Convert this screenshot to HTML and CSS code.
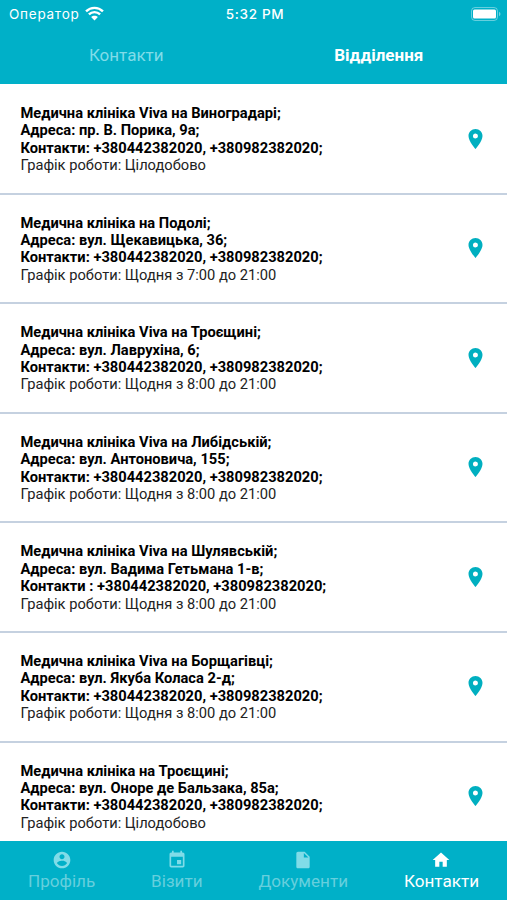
FILE: index.html
```html
<!DOCTYPE html>
<html lang="uk">

<head>
    <meta charset="UTF-8">
    <meta name="viewport" content="width=device-width, initial-scale=1.0">
    <title>Відділення</title>
    <link rel="stylesheet" href="styles.css">
</head>

<body>
    <svg width="0" height="0" class="sprite">
        <symbol id="pin" viewBox="5 2 14 20">
            <path d="M12 2C8.13 2 5 5.13 5 9c0 5.25 7 13 7 13s7-7.75 7-13c0-3.87-3.13-7-7-7zm0 9.5a2.5 2.5 0 1 1 0-5 2.5 2.5 0 0 1 0 5z" />
        </symbol>
    </svg>

    <header class="header">
        <div class="status">
            <div class="operator">
                <span>Оператор</span>
                <svg class="wifi" viewBox="0 0 18 14">
                    <path d="M1 5C5.5 .6 12.500 .6 17 5M3.700 7.900C6.700 5 11.300 5 14.300 7.900" fill="none" stroke="#fff" stroke-width="2.300" />
                    <path d="M9 13.600L5.800 10.400C7.500 8.700 10.500 8.700 12.200 10.400z" fill="#fff" />
                </svg>
            </div>
            <span class="time">5:32 PM</span>
            <div class="power">
                <svg class="battery" viewBox="0 0 30 14">
                    <rect x=".5" y=".5" width="26" height="13" rx="3.500" fill="none" stroke="#fff" stroke-opacity=".4" />
                    <rect x="2" y="2.500" width="23" height="9" rx="1.500" fill="#fff" />
                    <path d="M28 4.800c2 .8 2 3.600 0 4.400z" fill="#fff" fill-opacity=".45" />
                </svg>
            </div>
        </div>
        <div class="tabs">
            <a class="tab">Контакти</a>
            <a class="tab active">Відділення</a>
        </div>
    </header>

    <main class="list">
        <div class="item">
            <div class="info">
                <b>Медична клініка Viva на Виноградарі;</b>
                <b>Адреса: пр. В. Порика, 9а;</b>
                <b>Контакти: +380442382020, +380982382020;</b>
                <span>Графік роботи: Цілодобово</span>
            </div>
            <svg class="pin"><use href="#pin" /></svg>
        </div>
        <div class="item">
            <div class="info">
                <b>Медична клініка на Подолі;</b>
                <b>Адреса: вул. Щекавицька, 36;</b>
                <b>Контакти: +380442382020, +380982382020;</b>
                <span>Графік роботи: Щодня з 7:00 до 21:00</span>
            </div>
            <svg class="pin"><use href="#pin" /></svg>
        </div>
        <div class="item">
            <div class="info">
                <b>Медична клініка Viva на Троєщині;</b>
                <b>Адреса: вул. Лаврухіна, 6;</b>
                <b>Контакти: +380442382020, +380982382020;</b>
                <span>Графік роботи: Щодня з 8:00 до 21:00</span>
            </div>
            <svg class="pin"><use href="#pin" /></svg>
        </div>
        <div class="item">
            <div class="info">
                <b>Медична клініка Viva на Либідській;</b>
                <b>Адреса: вул. Антоновича, 155;</b>
                <b>Контакти: +380442382020, +380982382020;</b>
                <span>Графік роботи: Щодня з 8:00 до 21:00</span>
            </div>
            <svg class="pin"><use href="#pin" /></svg>
        </div>
        <div class="item">
            <div class="info">
                <b>Медична клініка Viva на Шулявській;</b>
                <b>Адреса: вул. Вадима Гетьмана 1-в;</b>
                <b>Контакти : +380442382020, +380982382020;</b>
                <span>Графік роботи: Щодня з 8:00 до 21:00</span>
            </div>
            <svg class="pin"><use href="#pin" /></svg>
        </div>
        <div class="item">
            <div class="info">
                <b>Медична клініка Viva на Борщагівці;</b>
                <b>Адреса: вул. Якуба Коласа 2-д;</b>
                <b>Контакти: +380442382020, +380982382020;</b>
                <span>Графік роботи: Щодня з 8:00 до 21:00</span>
            </div>
            <svg class="pin"><use href="#pin" /></svg>
        </div>
        <div class="item">
            <div class="info">
                <b>Медична клініка на Троєщині;</b>
                <b>Адреса: вул. Оноре де Бальзака, 85а;</b>
                <b>Контакти: +380442382020, +380982382020;</b>
                <span>Графік роботи: Цілодобово</span>
            </div>
            <svg class="pin"><use href="#pin" /></svg>
        </div>
    </main>

    <nav class="nav">
        <a class="nav-item">
            <svg viewBox="0 0 24 24"><path d="M12 2C6.480 2 2 6.480 2 12s4.480 10 10 10 10-4.480 10-10S17.520 2 12 2zm0 3c1.660 0 3 1.340 3 3s-1.340 3-3 3-3-1.340-3-3 1.340-3 3-3zm0 14.200c-2.500 0-4.710-1.280-6-3.220.030-1.990 4-3.080 6-3.080 1.990 0 5.970 1.090 6 3.080-1.290 1.940-3.500 3.220-6 3.220z" /></svg>
            <span>Профіль</span>
        </a>
        <a class="nav-item">
            <svg viewBox="0 0 24 24"><path d="M17 12h-5v5h5v-5zM16 1v2H8V1H6v2H5c-1.110 0-1.990.9-1.990 2L3 19c0 1.100.89 2 2 2h14c1.100 0 2-.9 2-2V5c0-1.100-.9-2-2-2h-1V1h-2zm3 18H5V8h14v11z" /></svg>
            <span>Візити</span>
        </a>
        <a class="nav-item">
            <svg viewBox="0 0 24 24"><path d="M6 2c-1.100 0-1.990.9-1.990 2L4 20c0 1.100.89 2 1.990 2H18c1.100 0 2-.9 2-2V8l-6-6H6zm7 7V3.500L18.500 9H13z" /></svg>
            <span>Документи</span>
        </a>
        <a class="nav-item active">
            <svg viewBox="0 0 24 24"><path d="M10 20v-6h4v6h5v-8h3L12 3 2 12h3v8z" /></svg>
            <span>Контакти</span>
        </a>
    </nav>
</body>

</html>
```
FILE: styles.css
```css
* {
    box-sizing: border-box;
}

body {
    margin: 0;
    height: 900px;
    display: flex;
    flex-direction: column;
    overflow: hidden;
    background-color: white;
    font-family: Roboto, sans-serif;
}

.sprite {
    display: none;
}

.header {
    height: 84px;
    flex-shrink: 0;
    background-color: #00b0c8;
    color: white;
}

.status {
    height: 28px;
    padding: 0 6px 0 9px;
    display: grid;
    grid-template-columns: 1fr auto 1fr;
    align-items: center;
    font-family: Inter, sans-serif;
    font-size: 13.5px;
}

.operator {
    display: flex;
    align-items: center;
    gap: 5px;
    letter-spacing: 0.75px;
}

.wifi {
    width: 19px;
    height: 15px;
    margin-top: -2px;
}

.time {
    font-weight: 500;
    letter-spacing: 0.7px;
}

.power {
    display: flex;
    justify-content: flex-end;
}

.battery {
    width: 30px;
    height: 14px;
    margin-top: -1px;
}

.tabs {
    height: 54px;
    display: flex;
    align-items: center;
}

.tab {
    flex: 1;
    text-align: center;
    font-size: 17px;
    color: #80dce8;
}

.tab.active {
    padding-right: 2px;
    font-weight: bold;
    color: white;
}

.list {
    flex: 1;
    min-height: 0;
    padding-top: 1px;
    overflow: hidden;
}

.item {
    height: 109.6px;
    padding: 20px 24px 0 20.5px;
    display: flex;
    justify-content: space-between;
    border-bottom: 2px solid #c5d1e0;
}

.info {
    font-size: 14.68px;
    line-height: 17.4px;
    color: #222;
}

.info b,
.info span {
    display: block;
    white-space: nowrap;
}

.info b {
    color: black;
}

.pin {
    width: 15px;
    height: 20px;
    margin-top: 23.5px;
    fill: #00afc0;
}

.nav {
    height: 59px;
    flex-shrink: 0;
    padding-top: 9px;
    display: flex;
    justify-content: space-around;
    background-color: #00b0c8;
}

.nav-item {
    display: flex;
    flex-direction: column;
    align-items: center;
    font-size: 17.1px;
    line-height: 22px;
    color: #66cfdd;
}

.nav-item svg {
    width: 20px;
    height: 20px;
    fill: #80dce8;
}

.nav-item.active {
    color: white;
}

.nav-item.active svg {
    fill: white;
}
```
